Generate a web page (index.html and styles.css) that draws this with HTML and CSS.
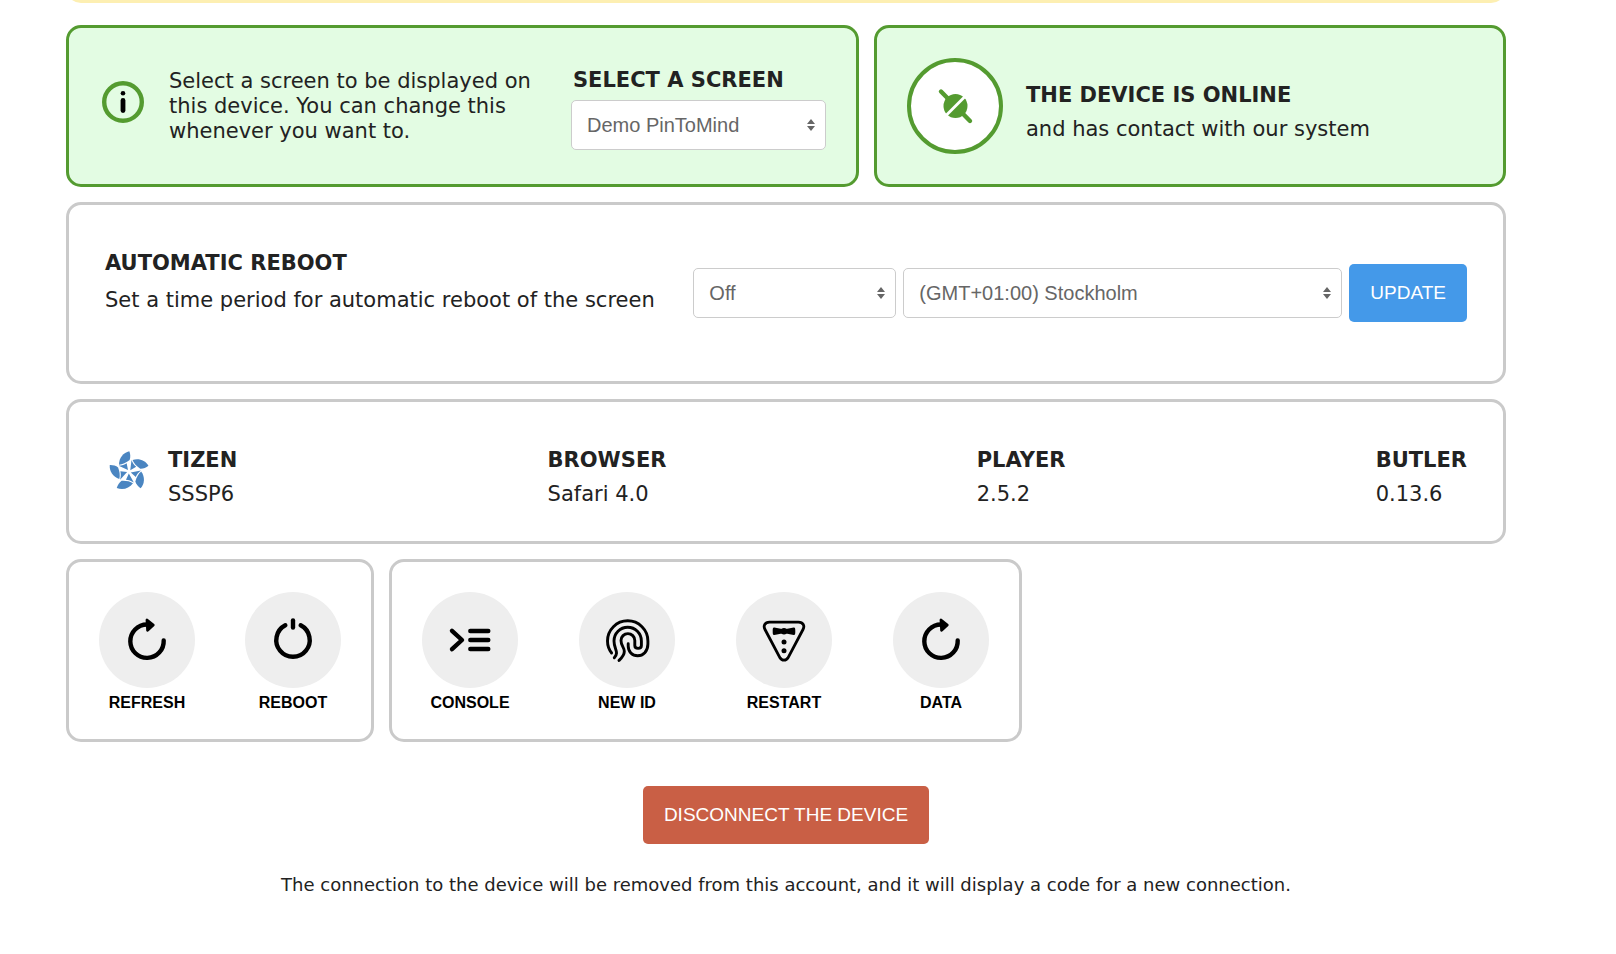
FILE: index.html
```html
<!DOCTYPE html>
<html lang="en">
<head>
  <meta charset="UTF-8">
  <meta name="viewport" content="width=device-width, initial-scale=1.0">
  <title>Device settings</title>
  <link rel="stylesheet" href="styles.css">
</head>
<body>

  <!-- Shared icons -->
  <svg class="sprite" aria-hidden="true">
    <symbol id="icon-sort" viewBox="0 0 8 12">
      <path d="M4 0 L8 5 H0 Z M4 12 L8 7 H0 Z" fill="#666"/>
    </symbol>
    <symbol id="icon-refresh" viewBox="0 0 48 48">
      <path d="M40.7 24.5 A16.7 16.7 0 1 1 24 8.5" fill="none" stroke="#000" stroke-width="4.4" stroke-linecap="round"/>
      <path d="M24 4 L30.3 9 L24.6 14.3 Z" stroke="#000" stroke-width="2.8" stroke-linejoin="round"/>
    </symbol>
  </svg>

  <div class="notice"></div>

  <main class="page">
    <!-- Screen and status -->
    <div class="status-row">
      <section class="card card-green select-card">
        <svg class="info-icon" viewBox="0 0 42 42" aria-hidden="true">
          <circle cx="21" cy="21" r="18.8" fill="none" stroke="#549b30" stroke-width="4.4"/>
          <circle cx="21" cy="12.2" r="2.3"/>
          <path d="M21 19.5 V29.5" stroke="#000" stroke-width="4.8" stroke-linecap="round"/>
        </svg>
        <p class="select-info">Select a screen to be displayed on this device. You can change this whenever you want to.</p>
        <div class="screen-field">
          <label class="title" for="screen">SELECT A SCREEN</label>
          <div class="select">
            <select id="screen">
              <option>Demo PinToMind</option>
            </select>
            <svg><use href="#icon-sort"/></svg>
          </div>
        </div>
      </section>

      <section class="card card-green online-card">
        <div class="online-icon">
          <svg viewBox="0 0 42 42" aria-hidden="true">
            <path d="M7 6.5 L36 36" stroke="#549b30" stroke-width="4.4" stroke-linecap="round"/>
            <circle cx="21.5" cy="21" r="12" fill="#549b30"/>
            <path d="M11 31.5 L32 10.5" stroke="#fff" stroke-width="2.8"/>
          </svg>
        </div>
        <div class="online-text">
          <h2 class="title">THE DEVICE IS ONLINE</h2>
          <p>and has contact with our system</p>
        </div>
      </section>
    </div>

    <!-- Automatic reboot -->
    <section class="card reboot-card">
      <div class="reboot-text">
        <h2 class="title">AUTOMATIC REBOOT</h2>
        <p>Set a time period for automatic reboot of the screen</p>
      </div>
      <form class="reboot-form">
        <div class="select select-time">
          <select aria-label="Reboot time">
            <option>Off</option>
          </select>
          <svg><use href="#icon-sort"/></svg>
        </div>
        <div class="select select-zone">
          <select aria-label="Time zone">
            <option>(GMT+01:00) Stockholm</option>
          </select>
          <svg><use href="#icon-sort"/></svg>
        </div>
        <button class="button button-blue" type="button">UPDATE</button>
      </form>
    </section>

    <!-- Versions -->
    <section class="card version-card">
      <div class="platform">
        <svg class="tizen" viewBox="-72 -74 144 144" aria-hidden="true">
          <defs>
            <g id="blade">
              <path d="M1 -61 C-17 -57 -30 -41 -30 -21 C-20 -21 -8 -27 2 -35 C5 -43 4 -53 1 -61 Z"/>
              <path d="M-31 -18 C-22 -18 -13 -21 -7 -25 L-3 -5 Z"/>
            </g>
          </defs>
          <g fill="#4a85c1">
            <use href="#blade"/>
            <use href="#blade" transform="rotate(72)"/>
            <use href="#blade" transform="rotate(144)"/>
            <use href="#blade" transform="rotate(216)"/>
            <use href="#blade" transform="rotate(288)"/>
          </g>
        </svg>
        <div>
          <h2 class="title">TIZEN</h2>
          <p>SSSP6</p>
        </div>
      </div>
      <div>
        <h2 class="title">BROWSER</h2>
        <p>Safari 4.0</p>
      </div>
      <div>
        <h2 class="title">PLAYER</h2>
        <p>2.5.2</p>
      </div>
      <div>
        <h2 class="title">BUTLER</h2>
        <p>0.13.6</p>
      </div>
    </section>

    <!-- Actions -->
    <div class="action-row">
      <section class="card action-card device-actions">
        <button class="action" type="button">
          <span class="action-icon"><svg><use href="#icon-refresh"/></svg></span>
          REFRESH
        </button>
        <button class="action" type="button">
          <span class="action-icon">
            <svg viewBox="0 0 48 48" fill="none" stroke="#000" stroke-width="4.4" stroke-linecap="round">
              <path d="M16.3 9.3 A16.7 16.7 0 1 0 31.7 9.3"/>
              <path d="M24 4.5 V11.5"/>
            </svg>
          </span>
          REBOOT
        </button>
      </section>

      <section class="card action-card player-actions">
        <button class="action" type="button">
          <span class="action-icon">
            <svg viewBox="0 0 48 48" fill="none" stroke="#000" stroke-width="4.4" stroke-linecap="round" stroke-linejoin="round">
              <path d="M6 14.8 L16 24 L6 33.2"/>
              <path d="M24.3 15 H42.3 M24.3 24 H42.3 M24.3 33 H42.3"/>
            </svg>
          </span>
          CONSOLE
        </button>
        <button class="action" type="button">
          <span class="action-icon">
            <svg viewBox="0 0 48 48" fill="none" stroke="#000" stroke-width="2.9" stroke-linecap="round">
              <path d="M8.6 37 C5.5 33 4.5 29 4.5 25 A20.2 20.2 0 0 1 44.9 25 V28 C44.9 35.5 40 39.8 34.7 39.8 C29 39.8 25.2 35.5 25.2 30 V27.7"/>
              <path d="M11.3 41.8 C16.5 36 11 33.5 11 25 A13.7 13.7 0 0 1 38.4 25 V29.5 C38.4 33.3 31.8 33.3 31.8 29.5 V24.5 A6.9 6.9 0 0 0 18 24.5 C18 30 21.3 31 21.3 35.5 C21.3 39.5 18.5 42 16 44.4"/>
            </svg>
          </span>
          NEW ID
        </button>
        <button class="action" type="button">
          <span class="action-icon">
            <svg viewBox="0 0 48 48">
              <path d="M9.5 6.2 H38.5 C43.2 6.2 45 9.8 43 13.5 L28 41.8 C26.2 45 21.8 45 20 41.8 L5 13.5 C3 9.8 4.8 6.2 9.5 6.2 Z" fill="none" stroke="#000" stroke-width="2.8"/>
              <path d="M14.3 11.6 L22 13 H26 L33.7 11.6 C35.3 11.4 35.3 13 35.3 15.3 C35.3 17.6 35.3 19.2 33.7 19 L26 17.6 H22 L14.3 19 C12.7 19.2 12.7 17.6 12.7 15.3 C12.7 13 12.7 11.4 14.3 11.6 Z"/>
              <circle cx="24" cy="15.3" r="3.2"/>
              <circle cx="24" cy="26" r="2.5"/>
              <circle cx="24" cy="34.7" r="2.5"/>
            </svg>
          </span>
          RESTART
        </button>
        <button class="action" type="button">
          <span class="action-icon"><svg><use href="#icon-refresh"/></svg></span>
          DATA
        </button>
      </section>
    </div>

    <!-- Disconnect -->
    <div class="disconnect">
      <button class="button button-red" type="button">DISCONNECT THE DEVICE</button>
      <p>The connection to the device will be removed from this account, and it will display a code for a new connection.</p>
    </div>
  </main>

</body>
</html>
```
FILE: styles.css
```css
* {
  box-sizing: border-box;
}

body {
  margin: 0;
  padding: 0 110px 40px 66px;
  background-color: #fff;
  color: #222;
  font-family: Verdana, "DejaVu Sans", sans-serif;
  font-size: 21px;
  line-height: 25px;
}

p {
  margin: 0;
}

.sprite {
  display: none;
}

/* Only the bottom edge of the notice shows */
.notice {
  height: 30px;
  margin: -27px 0 22px;
  background-color: #fdefb2;
  border-radius: 15px;
}

.page {
  display: flex;
  flex-direction: column;
  gap: 15px;
}

.title {
  display: block;
  margin: 10px 0 9px;
  font-size: 21px;
  line-height: 25px;
  font-weight: bold;
}

/* Cards */
.card {
  display: flex;
  border: 3px solid #cacaca;
  border-radius: 15px;
  background-color: #fff;
}

.card-green {
  align-items: center;
  padding: 30px;
  border-color: #549b30;
  background-color: #e3fce3;
}

/* Screen and status */
.status-row {
  display: grid;
  grid-template-columns: 793fr 632fr;
  gap: 15px;
}

.select-card {
  padding-left: 33px;
}

.info-icon {
  flex: none;
  width: 42px;
  height: 42px;
  margin: 0 25px 8px 0;
}

.select-info {
  flex: 1;
}

.screen-field {
  flex: none;
  align-self: flex-start;
  width: 255px;
}

.screen-field .title {
  margin-bottom: 7px;
  padding-left: 2px;
}

.online-card {
  gap: 23px;
}

.online-text {
  padding-top: 2px;
}

.online-icon {
  display: flex;
  align-items: center;
  justify-content: center;
  flex: none;
  width: 96px;
  height: 96px;
  border: 4px solid #549b30;
  border-radius: 50%;
  background-color: #fff;
}

.online-icon svg {
  width: 42px;
  height: 42px;
}

/* Form controls */
.select {
  position: relative;
}

.select select {
  display: block;
  width: 100%;
  height: 50px;
  padding: 0 30px 0 15px;
  border: 1px solid #ccc;
  border-radius: 5px;
  background-color: #fff;
  color: #666;
  font-family: Arial, "Liberation Sans", sans-serif;
  font-size: 20px;
  appearance: none;
}

.select svg {
  position: absolute;
  top: 19px;
  right: 11px;
  width: 8px;
  height: 12px;
  pointer-events: none;
}

.button {
  height: 58px;
  padding: 0 21px;
  border: none;
  border-radius: 5px;
  color: #fff;
  font-family: Arial, "Liberation Sans", sans-serif;
  font-size: 19px;
  cursor: pointer;
}

.button-blue {
  background-color: #4499e9;
}

.button-red {
  background-color: #c95f45;
}

/* Automatic reboot */
.reboot-card {
  justify-content: space-between;
  padding: 36px;
}

.reboot-text .title {
  margin-bottom: 12px;
}

.reboot-form {
  display: flex;
  align-items: center;
  gap: 7px;
  padding: 23px 0;
}

.select-time {
  width: 203px;
}

.select-zone {
  width: 439px;
}

/* Versions */
.version-card {
  justify-content: space-between;
  padding: 36px 36px 34px;
}

.platform {
  display: flex;
  gap: 15px;
}

.tizen {
  width: 48px;
  height: 48px;
  margin-top: 9px;
}

/* Actions */
.action-row {
  display: flex;
  gap: 15px;
}

.action-card {
  padding: 30px 30px 25px;
}

.device-actions {
  gap: 50px;
}

.player-actions {
  gap: 61px;
}

.action {
  display: flex;
  flex-direction: column;
  align-items: center;
  gap: 4px;
  width: 96px;
  padding: 0;
  border: none;
  background: none;
  color: #000;
  font-family: Arial, "Liberation Sans", sans-serif;
  font-size: 16px;
  line-height: 22px;
  font-weight: bold;
  cursor: pointer;
}

.action-icon {
  display: flex;
  align-items: center;
  justify-content: center;
  width: 96px;
  height: 96px;
  border-radius: 50%;
  background-color: #eee;
}

.action-icon svg {
  width: 48px;
  height: 48px;
}

/* Disconnect */
.disconnect {
  margin-top: 29px;
  text-align: center;
}

.disconnect p {
  margin-top: 30px;
  font-size: 18px;
  line-height: 22px;
}
```
